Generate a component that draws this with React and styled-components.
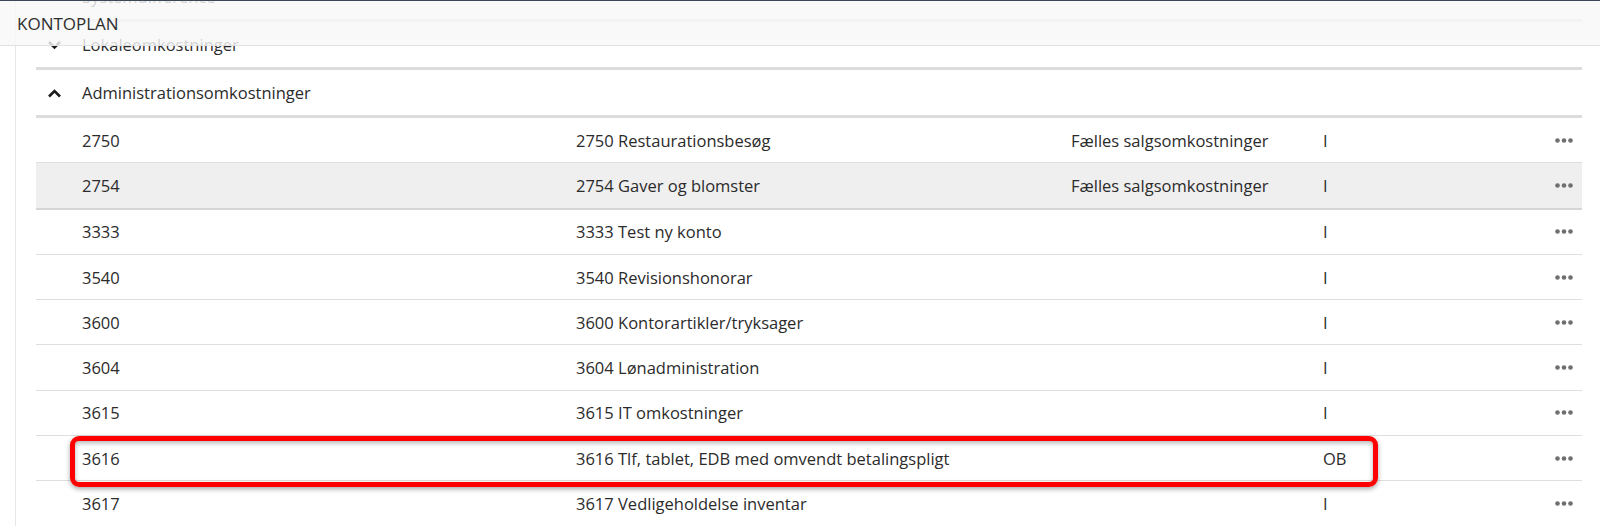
import React from 'react';
import styled, { createGlobalStyle } from 'styled-components';

const GlobalStyle = createGlobalStyle`
  html, body {
    margin: 0;
    padding: 0;
    background: #ffffff;
    overflow: hidden;
  }
  body {
    font-family: "Open Sans", "Noto Sans", Arial, sans-serif;
    color: #2b2b2b;
  }
`;

const Page = styled.div`
  position: relative;
  width: 1600px;
  height: 526px;
  overflow: hidden;
`;

const TopBar = styled.div`
  position: absolute;
  top: 0;
  left: 0;
  right: 0;
  height: 44px;
  border-top: 1px solid #3a4855;
  border-bottom: 1px solid #e2e2e2;
  background: rgba(248, 248, 248, 0.82);
  display: flex;
  align-items: center;
  padding-left: 17px;
  z-index: 5;
`;

const Title = styled.h1`
  margin: 0;
  font-size: 17px;
  font-weight: 400;
  color: #2e2e2e;
`;

const Content = styled.div`
  margin: -26px 18px 0 15px;
  padding-left: 20px;
  border-left: 1px solid #e6e6e6;
  min-height: 600px;
`;

const GroupRow = styled.div`
  display: flex;
  align-items: center;
  height: 45px;
  padding-left: 11px;
  border-bottom: 3px solid #dcdcdc;
  font-size: 16.5px;
`;

const ChevronBox = styled.span`
  display: inline-flex;
  width: 35px;
  align-items: center;
`;

const DataRow = styled.div`
  position: relative;
  display: grid;
  grid-template-columns: 494px 495px 252px 1fr 18px;
  align-items: center;
  height: 44.3px;
  padding: 0 9px 0 46px;
  background: ${p => (p.$hover ? '#efefef' : 'transparent')};
  border-bottom: ${p => (p.$hover ? '2px solid #d6d6d6' : '1px solid #dedede')};
  font-size: 16.5px;
`;

const Cell = styled.span`
  white-space: nowrap;
`;

const Highlight = styled.div`
  position: absolute;
  top: 0;
  left: 34px;
  width: 1308px;
  height: 51px;
  box-sizing: border-box;
  border: 5px solid #ff0000;
  border-radius: 9px;
  box-shadow: 0 2px 5px rgba(0, 0, 0, 0.35), inset 0 2px 5px rgba(0, 0, 0, 0.3);
  pointer-events: none;
`;

const Chevron = ({ up }) => (
  <svg width="15" height="10" viewBox="0 0 15 10">
    <path
      d={up ? 'M2 8.5 L7.5 3 L13 8.5' : 'M2 2 L7.5 7.5 L13 2'}
      fill="none"
      stroke="#1c1c1c"
      strokeWidth="2.6"
    />
  </svg>
);

const Dots = () => (
  <svg width="18" height="5" viewBox="0 0 18 5">
    <circle cx="2.5" cy="2.5" r="2.3" fill="#6f6f6f" />
    <circle cx="9" cy="2.5" r="2.3" fill="#6f6f6f" />
    <circle cx="15.5" cy="2.5" r="2.3" fill="#6f6f6f" />
  </svg>
);

const groups = [
  { name: 'Systemdifference', open: false },
  { name: 'Lokaleomkostninger', open: false },
  { name: 'Administrationsomkostninger', open: true },
];

const accounts = [
  { no: '2750', name: '2750 Restaurationsbesøg', group: 'Fælles salgsomkostninger', type: 'I' },
  { no: '2754', name: '2754 Gaver og blomster', group: 'Fælles salgsomkostninger', type: 'I', hover: true },
  { no: '3333', name: '3333 Test ny konto', group: '', type: 'I' },
  { no: '3540', name: '3540 Revisionshonorar', group: '', type: 'I' },
  { no: '3600', name: '3600 Kontorartikler/tryksager', group: '', type: 'I' },
  { no: '3604', name: '3604 Lønadministration', group: '', type: 'I' },
  { no: '3615', name: '3615 IT omkostninger', group: '', type: 'I' },
  { no: '3616', name: '3616 Tlf, tablet, EDB med omvendt betalingspligt', group: '', type: 'OB', marked: true },
  { no: '3617', name: '3617 Vedligeholdelse inventar', group: '', type: 'I' },
];

export default function App() {
  return (
    <Page>
      <GlobalStyle />
      <TopBar>
        <Title>KONTOPLAN</Title>
      </TopBar>
      <Content>
        {groups.map(g => (
          <GroupRow key={g.name}>
            <ChevronBox>
              <Chevron up={g.open} />
            </ChevronBox>
            {g.name}
          </GroupRow>
        ))}
        {accounts.map(a => (
          <DataRow key={a.no} $hover={a.hover}>
            <Cell>{a.no}</Cell>
            <Cell>{a.name}</Cell>
            <Cell>{a.group}</Cell>
            <Cell>{a.type}</Cell>
            <Dots />
            {a.marked && <Highlight />}
          </DataRow>
        ))}
      </Content>
    </Page>
  );
}
